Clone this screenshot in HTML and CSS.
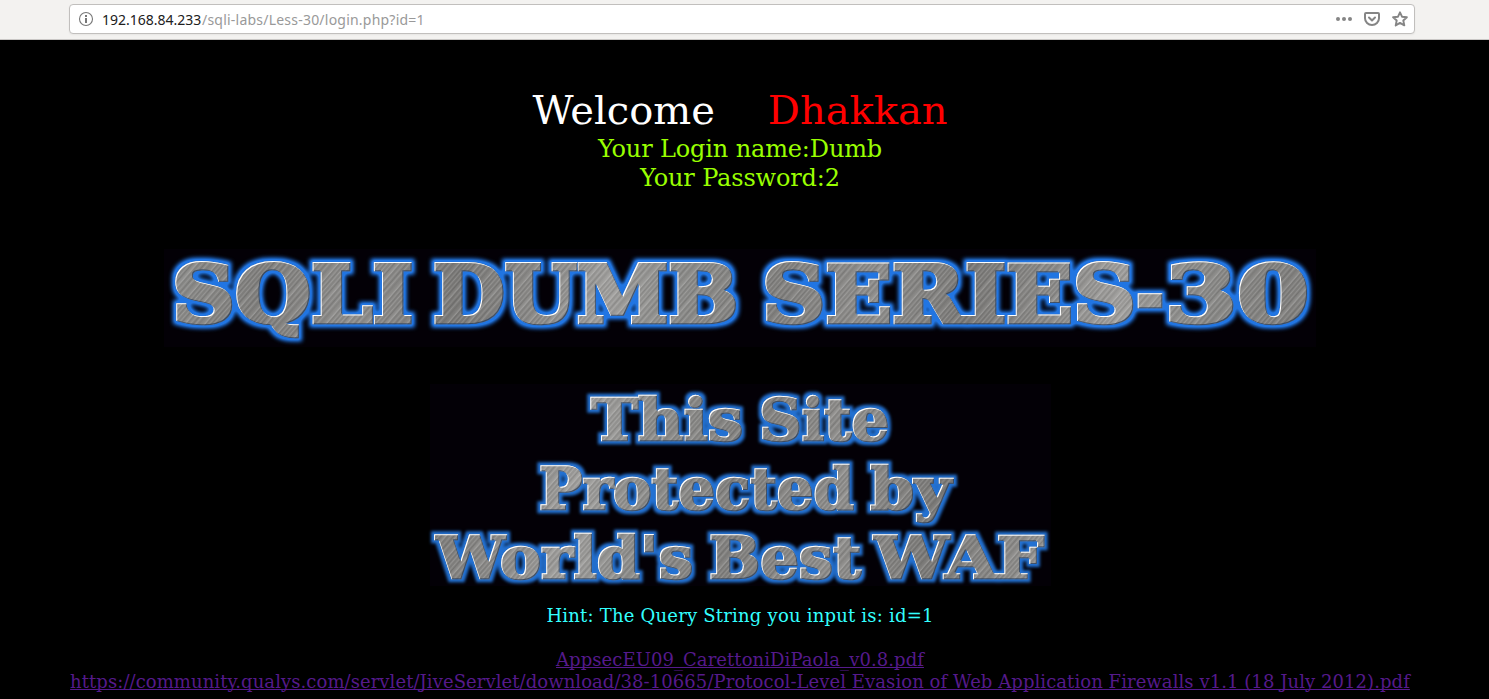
FILE: index.html
```html
<!DOCTYPE html>
<html lang="en">
<head>
<meta charset="utf-8">
<title>Less-30</title>
<link rel="stylesheet" href="styles.css">
</head>
<body>
<header class="toolbar">
  <div class="urlbar">
    <svg class="info" width="16" height="16" viewBox="0 0 16 16"><circle cx="8" cy="8" r="6.5" fill="none" stroke="#777" stroke-width="1.1"/><path d="M7 4h2v2H7zM7 7h2v5H7z" fill="#777"/></svg>
    <div class="address"><span class="host">192.168.84.233</span><span class="path">/sqli-labs/Less-30/login.php?id=1</span></div>
    <div class="actions">
      <svg width="16" height="16" viewBox="0 0 16 16" fill="#858585"><circle cx="2" cy="8" r="2"/><circle cx="8" cy="8" r="2"/><circle cx="14" cy="8" r="2"/></svg>
      <svg width="16" height="16" viewBox="0 0 16 16" fill="none" stroke="#858585" stroke-width="2" stroke-linecap="round" stroke-linejoin="round"><path d="M2 2h12a1 1 0 0 1 1 1v4.2a7 6.8 0 0 1-14 0V3a1 1 0 0 1 1-1z"/><path d="M5 6.5l3 3 3-3"/></svg>
      <svg width="16" height="16" viewBox="0 0 16 16" fill="none" stroke="#858585" stroke-width="1.9" stroke-linejoin="round"><path d="M8 1.3l2 4.4 4.9.5-3.6 3.3 1 4.9L8 11.9l-4.3 2.5 1-4.9L1.1 6.2 6 5.7z"/></svg>
    </div>
  </div>
</header>
<main class="page">
  <h1 class="welcome"><span>Welcome</span><span class="user">Dhakkan</span></h1>
  <p class="login">Your Login name:Dumb<br>Your Password:2</p>
  <svg class="series" viewBox="164 249 1152 98" width="1152" height="98">
    <defs>
      <linearGradient id="shade" gradientUnits="userSpaceOnUse" x1="164" y1="250" x2="664" y2="330" spreadMethod="repeat">
        <stop offset="0" stop-color="#8d8d8b"/><stop offset=".2" stop-color="#807f7d"/><stop offset=".4" stop-color="#8f8e8c"/><stop offset=".58" stop-color="#7a7977"/><stop offset=".75" stop-color="#8c8b89"/><stop offset=".88" stop-color="#a09f9d"/><stop offset="1" stop-color="#8d8d8b"/>
      </linearGradient>
      <linearGradient id="streak" gradientUnits="userSpaceOnUse" x1="0" y1="0" x2="23" y2="20" spreadMethod="repeat">
        <stop offset="0" stop-color="#fff" stop-opacity=".04"/><stop offset=".05" stop-color="#fff" stop-opacity=".2"/><stop offset=".09" stop-color="#000" stop-opacity=".08"/><stop offset=".16" stop-color="#fff" stop-opacity=".1"/><stop offset=".21" stop-color="#000" stop-opacity=".1"/><stop offset=".27" stop-color="#fff" stop-opacity=".15"/><stop offset=".33" stop-color="#000" stop-opacity=".04"/><stop offset=".38" stop-color="#fff" stop-opacity=".12"/><stop offset=".44" stop-color="#000" stop-opacity=".12"/><stop offset=".51" stop-color="#fff" stop-opacity=".06"/><stop offset=".56" stop-color="#fff" stop-opacity=".2"/><stop offset=".61" stop-color="#000" stop-opacity=".06"/><stop offset=".68" stop-color="#fff" stop-opacity=".1"/><stop offset=".75" stop-color="#000" stop-opacity=".12"/><stop offset=".82" stop-color="#fff" stop-opacity=".14"/><stop offset=".9" stop-color="#000" stop-opacity=".06"/><stop offset="1" stop-color="#fff" stop-opacity=".04"/>
      </linearGradient>
      <pattern id="metal" patternUnits="userSpaceOnUse" width="1489" height="699"><rect width="1489" height="699" fill="url(#shade)"/><rect width="1489" height="699" fill="url(#streak)"/></pattern>
      <filter id="neon" filterUnits="userSpaceOnUse" x="160" y="240" width="1160" height="350" color-interpolation-filters="sRGB">
        <feMorphology in="SourceAlpha" operator="dilate" radius="3"/><feGaussianBlur stdDeviation="2.3" result="spread"/>
        <feComponentTransfer in="spread" result="wide"><feFuncA type="linear" slope="1.35"/></feComponentTransfer>
        <feFlood flood-color="#2175e2"/><feComposite in2="wide" operator="in" result="glow"/>
        <feOffset in="SourceAlpha" dx="1" dy="1" result="down"/><feFlood flood-color="#fff"/><feComposite in2="SourceAlpha" operator="in"/><feComposite in2="down" operator="out" result="light"/>
        <feOffset in="SourceAlpha" dx="-1" dy="-1" result="up"/><feFlood flood-color="#263c5b" flood-opacity=".75"/><feComposite in2="SourceAlpha" operator="in"/><feComposite in2="up" operator="out" result="dark"/>
        <feMerge><feMergeNode in="glow"/><feMergeNode in="SourceGraphic"/><feMergeNode in="dark"/><feMergeNode in="light"/></feMerge>
      </filter>
      <filter id="neon-small" filterUnits="userSpaceOnUse" x="420" y="375" width="640" height="220" color-interpolation-filters="sRGB">
        <feMorphology in="SourceAlpha" operator="dilate" radius="3"/><feGaussianBlur stdDeviation="1.4" result="wide"/>
        <feFlood flood-color="#2371d2"/><feComposite in2="wide" operator="in" result="glow"/>
        <feOffset in="SourceAlpha" dx="1" dy="1" result="down"/><feFlood flood-color="#fff"/><feComposite in2="SourceAlpha" operator="in"/><feComposite in2="down" operator="out" result="light"/>
        <feOffset in="SourceAlpha" dx="-1" dy="-1" result="up"/><feFlood flood-color="#263c5b" flood-opacity=".75"/><feComposite in2="SourceAlpha" operator="in"/><feComposite in2="up" operator="out" result="dark"/>
        <feMerge><feMergeNode in="glow"/><feMergeNode in="SourceGraphic"/><feMergeNode in="dark"/><feMergeNode in="light"/></feMerge>
      </filter>
    </defs>
    <g class="metal-text large" filter="url(#neon)">
      <text x="172" y="322" textLength="241" lengthAdjust="spacingAndGlyphs">SQLI</text>
      <text x="433" y="322" textLength="305" lengthAdjust="spacingAndGlyphs">DUMB</text>
      <text x="762" y="322" textLength="374" lengthAdjust="spacingAndGlyphs">SERIES</text>
      <text x="1136" y="322" textLength="28" lengthAdjust="spacingAndGlyphs">-</text>
      <text x="1165" y="322" textLength="144" lengthAdjust="spacingAndGlyphs">30</text>
    </g>
  </svg>
  <svg class="waf" viewBox="429 384 621 202" width="621" height="202">
    <g class="metal-text small" filter="url(#neon-small)">
      <text x="590" y="440" textLength="152" lengthAdjust="spacingAndGlyphs">This</text>
      <text x="758" y="440" textLength="130" lengthAdjust="spacingAndGlyphs">Site</text>
      <text x="538" y="509" textLength="315" lengthAdjust="spacingAndGlyphs">Protected</text>
      <text x="869" y="509" textLength="81" lengthAdjust="spacingAndGlyphs">by</text>
      <text x="435" y="578" textLength="257" lengthAdjust="spacingAndGlyphs">World's</text>
      <text x="708" y="578" textLength="152" lengthAdjust="spacingAndGlyphs">Best</text>
      <text x="873" y="578" textLength="170" lengthAdjust="spacingAndGlyphs">WAF</text>
    </g>
  </svg>
  <p class="hint">Hint: The Query String you input is: id=1</p>
  <nav class="links">
    <a href="#">AppsecEU09_CarettoniDiPaola_v0.8.pdf</a>
    <a href="#">https://community.qualys.com/servlet/JiveServlet/download/38-10665/Protocol-Level Evasion of Web Application Firewalls v1.1 (18 July 2012).pdf</a>
  </nav>
</main>
</body>
</html>
```
FILE: styles.css
```css
* { box-sizing: border-box; }
body { margin: 0; height: 699px; background: #000; font-family: "DejaVu Serif", serif; }
.toolbar { height: 40px; padding: 4px 74px 0 69px; background: #f3f2f0; border-bottom: 1px solid #c9c7c5; }
.urlbar { display: flex; align-items: center; height: 30px; padding: 0 6px 0 9px; background: #fff; border: 1px solid #c1bfbd; border-radius: 4px; box-shadow: 0 1px 2px rgba(0,0,0,.05); }
.info { margin-right: 7px; flex: none; position: relative; left: -1px; }
.address { flex: 1; display: flex; font: 14px/20px "Noto Sans", sans-serif; white-space: pre; padding-top: 1px; }
.host { color: #202020; letter-spacing: 0; width: 100px; }
.path { color: #999; letter-spacing: .22px; }
.actions { display: flex; gap: 12px; }
.page { display: flex; flex-direction: column; align-items: center; height: 659px; padding: 46px 9px 0 0; }
.welcome { display: flex; gap: 53px; margin: 0; font-size: 40px; line-height: 48px; font-weight: 400; color: #fff; }
.user { color: #f00; }
.login { margin: 1px 0 0; font-size: 24px; line-height: 29px; letter-spacing: -.14px; color: #9f0; text-align: center; }
.series { flex: none; margin-top: 56px; background: #030006; overflow: visible; }
.waf { flex: none; margin-top: 37px; background: #030006; overflow: visible; }
.metal-text { font-family: "DejaVu Serif", serif; font-weight: 700; fill: url(#metal); stroke: url(#metal); stroke-linejoin: miter; }
.large { font-size: 79px; stroke-width: 4.5px; }
.small { font-size: 58px; stroke-width: 2.6px; }
.hint { margin: 19px 0 0; font-size: 18px; line-height: 22px; letter-spacing: .21px; color: #3ff; white-space: nowrap; }
.links { display: flex; flex-direction: column; align-items: center; margin-top: 22px; font-size: 18px; line-height: 22px; letter-spacing: .07px; white-space: nowrap; }
.links a { color: #551a8b; text-decoration: underline; text-decoration-skip-ink: none; }
```
